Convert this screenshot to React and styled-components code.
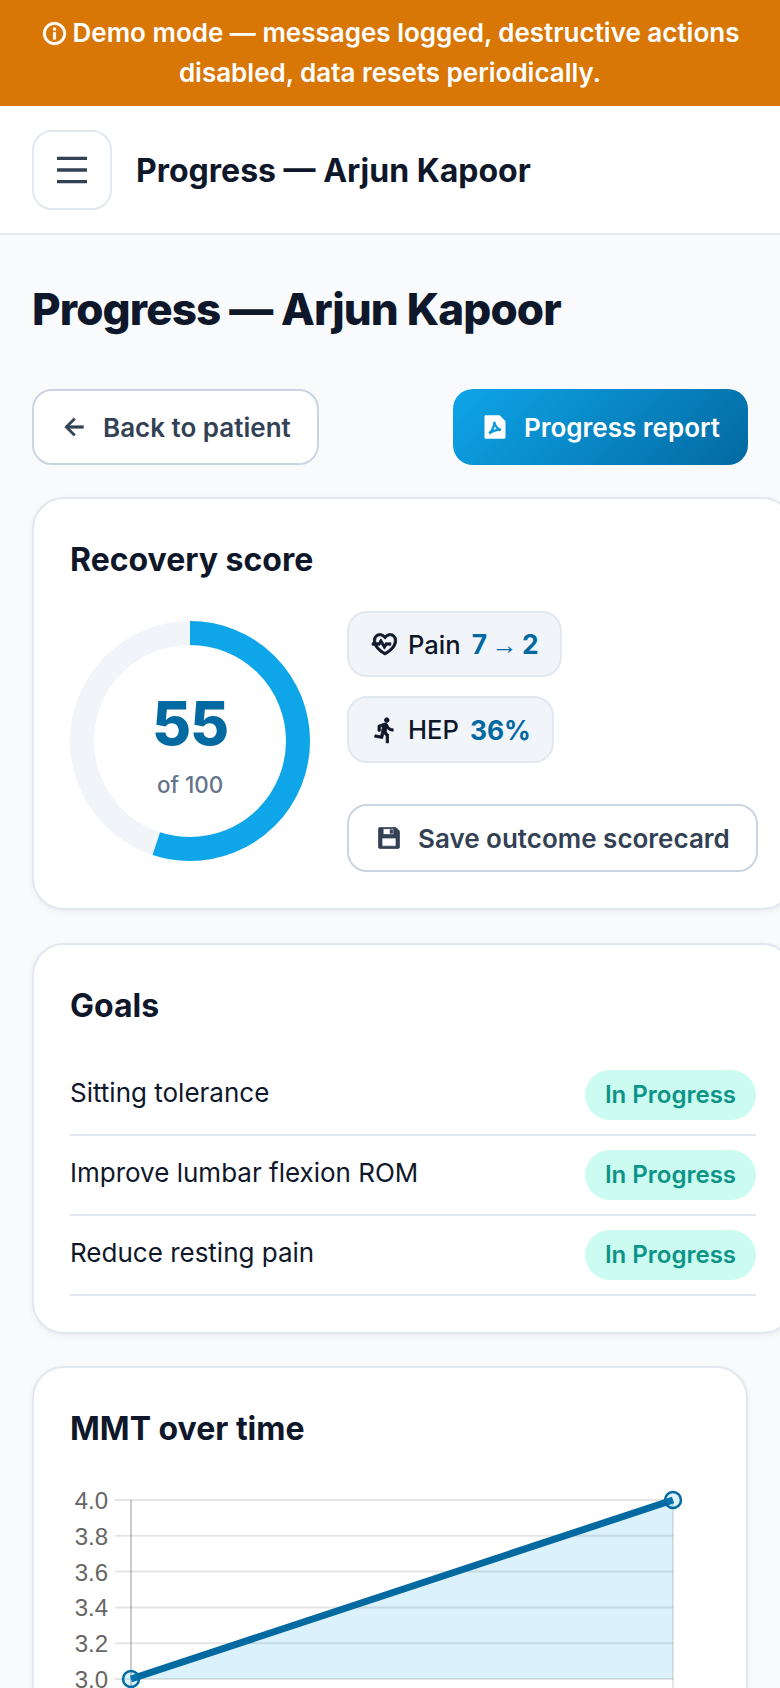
import React from "react";
import styled, { createGlobalStyle } from "styled-components";
import {
  RiInformationLine,
  RiMenuLine,
  RiArrowLeftLine,
  RiFilePdf2Fill,
  RiHeartPulseLine,
  RiRunFill,
  RiSave3Fill,
} from "react-icons/ri";

const Global = createGlobalStyle`
  html, body {
    margin: 0;
    padding: 0;
    background: #f8fafc;
    font-family: Inter, "Liberation Sans", sans-serif;
    color: #0f172a;
  }
  * {
    box-sizing: border-box;
  }
`;

const Page = styled.div`
  width: 780px;
  height: 1688px;
  overflow: hidden;
`;
const Banner = styled.div`
  background: #d97706;
  color: #fff;
  font-size: 26px;
  font-weight: 600;
  line-height: 40px;
  text-align: center;
  padding: 13px 32px;
  svg {
    vertical-align: -5px;
    margin-right: 5px;
    stroke: currentColor;
    stroke-width: 0.7px;
  }
`;
const Header = styled.header`
  display: flex;
  align-items: center;
  gap: 24px;
  height: 129px;
  padding: 0 32px;
  background: #fff;
  border-bottom: 2px solid #e2e8f0;
`;
const MenuButton = styled.button`
  display: flex;
  align-items: center;
  justify-content: center;
  width: 80px;
  height: 80px;
  padding: 0;
  background: #fff;
  border: 2px solid #e2e8f0;
  border-radius: 20px;
  color: #334155;
`;
const HeaderTitle = styled.div`
  padding-top: 2px;
  font-size: 32px;
  font-weight: 700;
`;
const Main = styled.main`
  padding: 44px 32px 0;
`;
const Title = styled.h1`
  margin: 0;
  font-size: 44px;
  line-height: 60px;
  font-weight: 800;
  letter-spacing: -0.88px;
`;
const Actions = styled.div`
  display: flex;
  justify-content: space-between;
  margin: 50px 0 32px;
`;
const Button = styled.button`
  display: inline-flex;
  align-items: center;
  justify-content: center;
  flex: none;
  gap: 15px;
  height: ${(p) => p.$height || 76}px;
  margin-top: ${(p) => p.$top || 0}px;
  padding: 0 26px;
  font-family: inherit;
  font-size: 26px;
  font-weight: 600;
  white-space: nowrap;
  border-radius: 20px;
  border: 2px solid ${(p) => (p.$primary ? "transparent" : "#cbd5e1")};
  color: ${(p) => (p.$primary ? "#fff" : "#334155")};
  background: ${(p) =>
    p.$primary ? "linear-gradient(135deg, #0ea5e9, #0369a1) border-box" : "#fff"};
  svg {
    stroke: ${(p) => (p.$primary ? "none" : "currentColor")};
    stroke-width: 0.6px;
  }
`;
const Card = styled.section`
  width: ${(p) => (p.$wide ? "762px" : "716px")};
  margin-bottom: 32.5px;
  padding: 37px 36px 36px;
  background: #fff;
  border: 2px solid #e2e8f0;
  border-radius: 32px;
  box-shadow: 0 2px 6px rgba(15, 23, 42, 0.06);
`;
const CardTitle = styled.h2`
  margin: 0;
  font-size: 32px;
  line-height: 48px;
  font-weight: 700;
`;
const ScoreRow = styled.div`
  display: flex;
  gap: 37px;
  margin-top: 27px;
  align-items: flex-start;
`;
const Donut = styled.div`
  position: relative;
  flex: 0 0 240px;
  height: 240px;
  margin-top: 10px;
`;
const DonutCenter = styled.div`
  position: absolute;
  inset: 0;
  padding-top: 6px;
  display: flex;
  flex-direction: column;
  align-items: center;
  justify-content: center;
`;
const ScoreNum = styled.div`
  font-size: 60px;
  line-height: 72px;
  font-weight: 800;
  letter-spacing: -1.2px;
  color: #0369a1;
`;
const ScoreOf = styled.div`
  margin-top: 9px;
  font-size: 22.4px;
  font-weight: 500;
  line-height: 34px;
  color: #64748b;
`;
const Side = styled.div`
  display: flex;
  flex-direction: column;
  align-items: flex-start;
`;
const Pill = styled.div`
  display: inline-flex;
  align-items: center;
  gap: 9px;
  height: ${(p) => p.$height}px;
  margin-bottom: 19px;
  padding: 0 21px 0 22px;
  background: #f1f5f9;
  border: 2px solid #e2e8f0;
  border-radius: 20px;
  font-size: 25.6px;
  font-weight: 500;
  svg {
    stroke: currentColor;
    stroke-width: 0.7px;
  }
`;
const PillValue = styled.span`
  margin-left: 2px;
  font-weight: 700;
  font-size: 26.4px;
  color: #0369a1;
`;
const Arrow = styled.span`
  margin: 0 -2px;
  font-family: "Liberation Sans", sans-serif;
  font-weight: 400;
`;
const GoalRow = styled.div`
  display: flex;
  justify-content: space-between;
  align-items: center;
  height: 80px;
  border-bottom: 2px solid #e2e8f0;
  font-size: 26px;
`;
const GoalName = styled.span`
  margin-top: -5px;
`;
const Badge = styled.span`
  display: flex;
  align-items: center;
  height: 50px;
  padding: 0 20px;
  border-radius: 25px;
  background: #ccfbf1;
  color: #0d9488;
  font-size: 24px;
  font-weight: 600;
`;
const GoalList = styled.div`
  margin-top: 26px;
`;
const ChartBox = styled.div`
  margin: 15px 0 0 0;
  height: 320px;
  svg {
    display: block;
    margin-left: -38px;
  }
`;

const goals = ["Sitting tolerance", "Improve lumbar flexion ROM", "Reduce resting pain"];
const ticks = ["4.0", "3.8", "3.6", "3.4", "3.2", "3.0"];
const radius = 108;
const circ = 2 * Math.PI * radius;

const MmtChart = () => {
  const left = 131;
  const right = 673;
  const top = 1502;
  const step = 35.8;
  return (
    <svg width="716" height="320" viewBox="32 1470 716 320">
      <path
        d={`M${left} ${top + step * 5} L${right} ${top} L${right} ${top + step * 5} Z`}
        fill="rgba(14,165,233,0.15)"
      />
      {ticks.map((t, i) => (
        <g key={t}>
          <line
            x1={115}
            x2={right}
            y1={top + step * i}
            y2={top + step * i}
            stroke="rgba(0,0,0,0.1)"
            strokeWidth="2"
          />
          <text
            x={108}
            y={top + step * i + 9}
            textAnchor="end"
            fontFamily="'Liberation Sans', Arial, sans-serif"
            fontSize="24"
            fill="#666"
          >
            {t}
          </text>
        </g>
      ))}
      <line x1={left} x2={left} y1={top} y2={top + step * 5 + 16} stroke="rgba(0,0,0,0.2)" strokeWidth="2" />
      <line x1={right} x2={right} y1={top} y2={top + step * 5 + 16} stroke="rgba(0,0,0,0.1)" strokeWidth="2" />
      <line x1={left} y1={top + step * 5} x2={right} y2={top} stroke="#0369a1" strokeWidth="7" />
      <circle cx={left} cy={top + step * 5} r="8" fill="rgba(14,165,233,0.15)" stroke="#0369a1" strokeWidth="2.5" />
      <circle cx={right} cy={top} r="8" fill="rgba(14,165,233,0.15)" stroke="#0369a1" strokeWidth="2.5" />
    </svg>
  );
};

export default function App() {
  return (
    <Page>
      <Global />
      <Banner>
        <RiInformationLine size={27} />
        Demo mode — messages logged, destructive actions disabled, data resets periodically.
      </Banner>
      <Header>
        <MenuButton>
          <RiMenuLine size={40} />
        </MenuButton>
        <HeaderTitle>Progress — Arjun Kapoor</HeaderTitle>
      </Header>
      <Main>
        <Title>Progress — Arjun Kapoor</Title>
        <Actions>
          <Button>
            <RiArrowLeftLine size={28} />
            Back to patient
          </Button>
          <Button $primary>
            <RiFilePdf2Fill size={28} />
            Progress report
          </Button>
        </Actions>
        <Card $wide>
          <CardTitle>Recovery score</CardTitle>
          <ScoreRow>
            <Donut>
              <svg width="240" height="240" viewBox="0 0 240 240">
                <circle cx="120" cy="120" r={radius} fill="none" stroke="#f1f5f9" strokeWidth="24" />
                <circle
                  cx="120"
                  cy="120"
                  r={radius}
                  fill="none"
                  stroke="#0ea5e9"
                  strokeWidth="24"
                  strokeDasharray={`${circ * 0.55} ${circ}`}
                  transform="rotate(-90 120 120)"
                />
              </svg>
              <DonutCenter>
                <ScoreNum>55</ScoreNum>
                <ScoreOf>of 100</ScoreOf>
              </DonutCenter>
            </Donut>
            <Side>
              <Pill $height={66}>
                <RiHeartPulseLine size={28} />
                Pain{" "}
                <PillValue>
                  7 <Arrow>→</Arrow> 2
                </PillValue>
              </Pill>
              <Pill $height={67}>
                <RiRunFill size={28} />
                HEP <PillValue>36%</PillValue>
              </Pill>
              <Button $height={68} $top={22}>
                <RiSave3Fill size={28} />
                Save outcome scorecard
              </Button>
            </Side>
          </ScoreRow>
        </Card>
        <Card $wide>
          <CardTitle>Goals</CardTitle>
          <GoalList>
            {goals.map((g) => (
              <GoalRow key={g}>
                <GoalName>{g}</GoalName>
                <Badge>In Progress</Badge>
              </GoalRow>
            ))}
          </GoalList>
        </Card>
        <Card>
          <CardTitle>MMT over time</CardTitle>
          <ChartBox>
            <MmtChart />
          </ChartBox>
        </Card>
      </Main>
    </Page>
  );
}
